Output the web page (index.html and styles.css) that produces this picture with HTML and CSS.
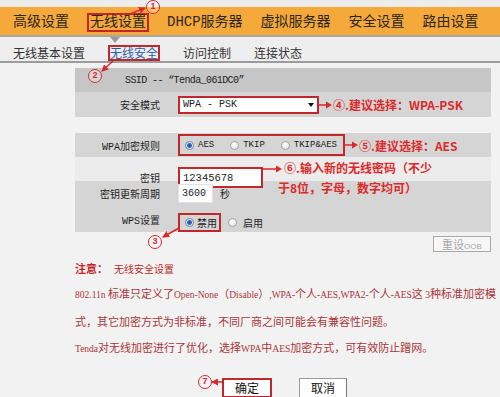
FILE: index.html
```html
<!DOCTYPE html>
<html lang="zh-CN">
<head>
<meta charset="utf-8">
<title>无线安全</title>
<link rel="stylesheet" href="styles.css">
</head>
<body>
<div class="topstrip"></div>
<nav class="nav">
  <span class="nav-item">高级设置</span>
  <span class="nav-item active">无线设置</span>
  <span class="nav-item">DHCP服务器</span>
  <span class="nav-item">虚拟服务器</span>
  <span class="nav-item">安全设置</span>
  <span class="nav-item">路由设置</span>
</nav>
<div class="subnav">
  <span class="sub-item">无线基本设置</span>
  <span class="sub-item active">无线安全</span>
  <span class="sub-item">访问控制</span>
  <span class="sub-item">连接状态</span>
</div>

<main class="main">
  <div class="row ssid"><span class="ssid-text">SSID -- “Tenda_061DC0”</span></div>
  <div class="row mode">
    <span class="lbl">安全模式</span>
    <div class="ctl">
      <div class="select"><span>WPA - PSK</span><span class="caret"></span></div>
      <div class="hint"><svg class="harrow" width="13" height="8" viewBox="0 0 13 8"><line x1="0" y1="4" x2="8" y2="4"/><path d="M7 0.5 L13 4 L7 7.5 Z"/></svg><span>④.建议选择：WPA-PSK</span></div>
    </div>
  </div>

  <div class="row rule">
    <span class="lbl">WPA加密规则</span>
    <div class="ctl">
      <div class="radios">
        <span class="opt"><span class="radio on"></span>AES</span>
        <span class="opt"><span class="radio"></span>TKIP</span>
        <span class="opt"><span class="radio"></span>TKIP&amp;AES</span>
      </div>
      <div class="hint"><svg class="harrow" width="13" height="8" viewBox="0 0 13 8"><line x1="0" y1="4" x2="8" y2="4"/><path d="M7 0.5 L13 4 L7 7.5 Z"/></svg><span>⑤.建议选择：AES</span></div>
    </div>
  </div>
  <div class="row key">
    <span class="lbl">密钥</span>
    <div class="ctl">
      <div class="input pwd">12345678</div>
      <div class="hint two"><svg class="harrow long" width="19" height="8" viewBox="0 0 19 8"><line x1="0" y1="4" x2="14" y2="4"/><path d="M13 0.5 L19 4 L13 7.5 Z"/></svg><span class="hint-lines">⑥.输入新的无线密码（不少<br><span class="l2">于8位，字母，数字均可）</span></span></div>
    </div>
  </div>
  <div class="row period">
    <span class="lbl">密钥更新周期</span>
    <div class="ctl">
      <div class="input num">3600</div>
      <span class="unit">秒</span>
    </div>
  </div>
  <div class="row wps">
    <span class="lbl">WPS设置</span>
    <div class="ctl">
      <div class="wpsbox"><span class="radio on"></span>禁用</div>
      <span class="opt off"><span class="radio"></span>启用</span>
    </div>
  </div>

  <div class="reset-row"><button class="btn-reset">重设<small>OOB</small></button></div>

  <div class="notice"><b>注意：</b><span>无线安全设置</span></div>
  <p class="para first"><span class="en">802.11n </span>标准只定义了<span class="en">Open-None</span>（<span class="en">Disable</span>）<span class="en">,WPA-</span>个人<span class="en">-AES,WPA2-</span>个人<span class="en">-AES</span>这<span class="en"> 3</span>种标准加密模<br>式，其它加密方式为非标准，不同厂商之间可能会有兼容性问题。</p>
  <p class="para"><span class="en">Tenda</span>对无线加密进行了优化，选择<span class="en">WPA</span>中<span class="en">AES</span>加密方式，可有效防止蹭网。</p>

  <div class="actions">
    <button class="btn ok">确定</button>
    <button class="btn cancel">取消</button>
  </div>
</main>

<svg class="overlay" width="500" height="397" viewBox="0 0 500 397">
  <defs>
    <marker id="ah" markerUnits="userSpaceOnUse" markerWidth="7" markerHeight="7" refX="6" refY="3.5" orient="auto">
      <path d="M0 0 L7 3.5 L0 7 Z" fill="#d8292b"/>
    </marker>
  </defs>
  <line x1="130" y1="14" x2="145" y2="8" marker-end="url(#ah)"/>
  <line x1="113" y1="61" x2="102" y2="71" marker-end="url(#ah)"/>
  <line x1="179" y1="228" x2="163" y2="237" marker-end="url(#ah)"/>
  <line x1="222" y1="382" x2="212" y2="382" marker-end="url(#ah)"/>
</svg>
<span class="mark m1">1</span>
<span class="mark m2">2</span>
<span class="mark m3">3</span>
<span class="mark m7">7</span>
</body>
</html>
```
FILE: styles.css
```css
* { box-sizing: border-box; }
html, body { margin: 0; padding: 0; }
body {
  width: 500px;
  height: 397px;
  overflow: hidden;
  position: relative;
  background: #f2f2f2;
  font-family: "Liberation Serif", "Noto Sans CJK SC", serif;
  color: #222;
}
.topstrip { height: 7px; background: #ededed; }
.nav {
  height: 30px;
  background: #f6a93b;
  border-bottom: 2px solid #a6a6a6;
  display: flex;
  align-items: center;
  gap: 18px;
  padding: 2px 0 0 13px;
  font-family: "Liberation Mono", "Noto Sans CJK SC", monospace;
  font-size: 14px;
  color: #2a2620;
}
.nav-item { line-height: 16px; white-space: nowrap; }
.nav-item.active {
  position: relative;
  border: 2px solid #c0282c;
  padding: 0 1px;
  line-height: 15px;
}
.nav-item.active::after {
  content: "";
  position: absolute;
  left: 21px;
  top: 22px;
  border-left: 5px solid transparent;
  border-right: 5px solid transparent;
  border-top: 6px solid #9a9a9a;
}
.subnav {
  height: 26px;
  background: #eeeeee;
  border-bottom: 2px solid #9c9c9c;
  display: flex;
  align-items: flex-end;
  gap: 23px;
  padding-left: 13px;
  font-family: "Noto Sans CJK SC", sans-serif;
  font-size: 12px;
  color: #333;
}
.sub-item { line-height: 16px; white-space: nowrap; }
.sub-item.active {
  color: #2a5db0;
  border: 2px solid #c0282c;
  line-height: 12px;
  height: 16px;
}

.main { margin: 5px 0 0 75px; width: 416px; position: relative; }
.row {
  display: grid;
  grid-template-columns: 90px 1fr;
  align-items: center;
  background: #d5d5d5;
  font-family: "Liberation Mono", "Noto Sans CJK SC", monospace;
  font-size: 10px;
  color: #1e1e1e;
}
.lbl { text-align: right; padding-right: 5px; white-space: nowrap; }
.ctl { display: flex; align-items: center; padding-left: 13px; }
.ssid { background: #c6c6c6; height: 24px; display: flex; padding-left: 50px; }
.ssid-text { letter-spacing: -0.6px; color: #222; }
.mode { height: 25px; margin-bottom: 16px; }
.rule { height: 24px; }
.key { height: 24px; background: #ececec; }
.period { height: 25px; }
.wps { height: 26px; }

.select {
  width: 141px;
  height: 18px;
  border: 2px solid #c0282c;
  background: #fff;
  display: flex;
  align-items: center;
  justify-content: space-between;
  padding: 0 3px 0 3px;
  font-size: 10px;
}
.caret {
  width: 0; height: 0;
  border-left: 3px solid transparent;
  border-right: 3px solid transparent;
  border-top: 4px solid #111;
}
.hint {
  display: flex;
  align-items: center;
  color: #dc2a2a;
  font-family: "Noto Sans CJK SC", sans-serif;
  font-weight: bold;
  font-size: 12px;
  white-space: nowrap;
}
.harrow { display: block; margin-right: 1px; }
.harrow line { stroke: #d8292b; stroke-width: 1.5; }
.harrow path { fill: #d8292b; }
.hint.two { align-items: flex-start; align-self: flex-start; margin-top: 1px; }
.hint.two .harrow { margin-top: 7px; margin-right: 2px; }
.hint-lines { line-height: 20px; }
.hint-lines .l2 { margin-left: -6px; }

.radios {
  width: 167px;
  height: 22px;
  border: 2px solid #c0282c;
  display: flex;
  align-items: center;
  padding-left: 5px;
  font-size: 9px;
}
.opt { display: flex; align-items: center; gap: 4px; margin-right: 16px; }
.radio {
  display: inline-block;
  width: 9px; height: 9px;
  border-radius: 50%;
  border: 1px solid #a2a2a2;
  background: radial-gradient(circle at 40% 35%, #ffffff, #e2e2e2);
  flex: none;
}
.radio.on {
  border-color: #6f86a8;
  background: radial-gradient(circle at 50% 50%, #1d4f9a 0, #3d6fbd 2px, #dfe6f0 3px, #ffffff 4px);
}
.input {
  background: #fff;
  display: flex;
  align-items: center;
  padding-left: 3px;
}
.pwd { width: 85px; height: 21px; border: 2px solid #c0282c; font-size: 10.5px; }
.num { width: 35px; height: 19px; border: 1px solid #e2e2e2; }
.unit { margin-left: 7px; font-family: "Noto Sans CJK SC", sans-serif; font-size: 10px; }
.wps .ctl { align-self: end; }
.wpsbox {
  width: 43px;
  height: 19px;
  border: 2px solid #c0282c;
  display: flex;
  align-items: center;
  gap: 3px;
  padding-left: 5px;
  font-family: "Noto Sans CJK SC", sans-serif;
  font-size: 10px;
}
.opt.off { margin-left: 7px; gap: 6px; font-family: "Noto Sans CJK SC", sans-serif; font-size: 10px; }

.reset-row { display: flex; justify-content: flex-end; margin-top: 4px; }
.btn-reset {
  width: 58px; height: 16px;
  border: 1px solid #a9a9a9;
  background: #f7f7f7;
  color: #a8a8a8;
  font-family: "Noto Sans CJK SC", sans-serif;
  font-size: 11px;
  padding: 0;
  line-height: 14px;
}
.btn-reset small { font-family: "Liberation Sans", sans-serif; font-size: 8px; }

.notice {
  margin-top: 8px;
  line-height: 16px;
  font-family: "Noto Sans CJK SC", sans-serif;
  font-size: 10px;
  color: #b52b2b;
}
.notice b { color: #c42628; margin-right: 6px; font-size: 11px; }
.para {
  margin: 0;
  line-height: 26px;
  font-family: "Noto Sans CJK SC", sans-serif;
  font-size: 11px;
  color: #a83639;
  white-space: nowrap;
}
.para .en { font-family: "Liberation Serif", serif; font-size: 9.5px; }
.para.first { margin-top: 3px; }

.actions { display: flex; gap: 27px; margin: 16px 0 0 147px; }
.btn {
  height: 20px;
  background: #fff;
  font-family: "Noto Sans CJK SC", sans-serif;
  font-size: 12px;
  color: #111;
  padding: 0;
  line-height: 16px;
}
.ok { width: 50px; border: 2px solid #c0282c; }
.cancel { width: 48px; border: 1px solid #9a9a9a; border-right-color: #777; border-bottom-color: #777; }

.overlay { position: absolute; left: 0; top: 0; pointer-events: none; }
.overlay line { stroke: #d8292b; stroke-width: 1.5; }
.mark {
  position: absolute;
  width: 14px; height: 14px;
  border: 1.5px solid #d8292b;
  border-radius: 50%;
  color: #d8292b;
  font-family: "Liberation Sans", sans-serif;
  font-weight: bold;
  font-size: 9px;
  line-height: 11px;
  text-align: center;
  background: rgba(255,255,255,0.3);
}
.m1 { left: 146px; top: 0; }
.m2 { left: 88px; top: 69px; }
.m3 { left: 148px; top: 235px; }
.m7 { left: 198px; top: 375px; }
```
